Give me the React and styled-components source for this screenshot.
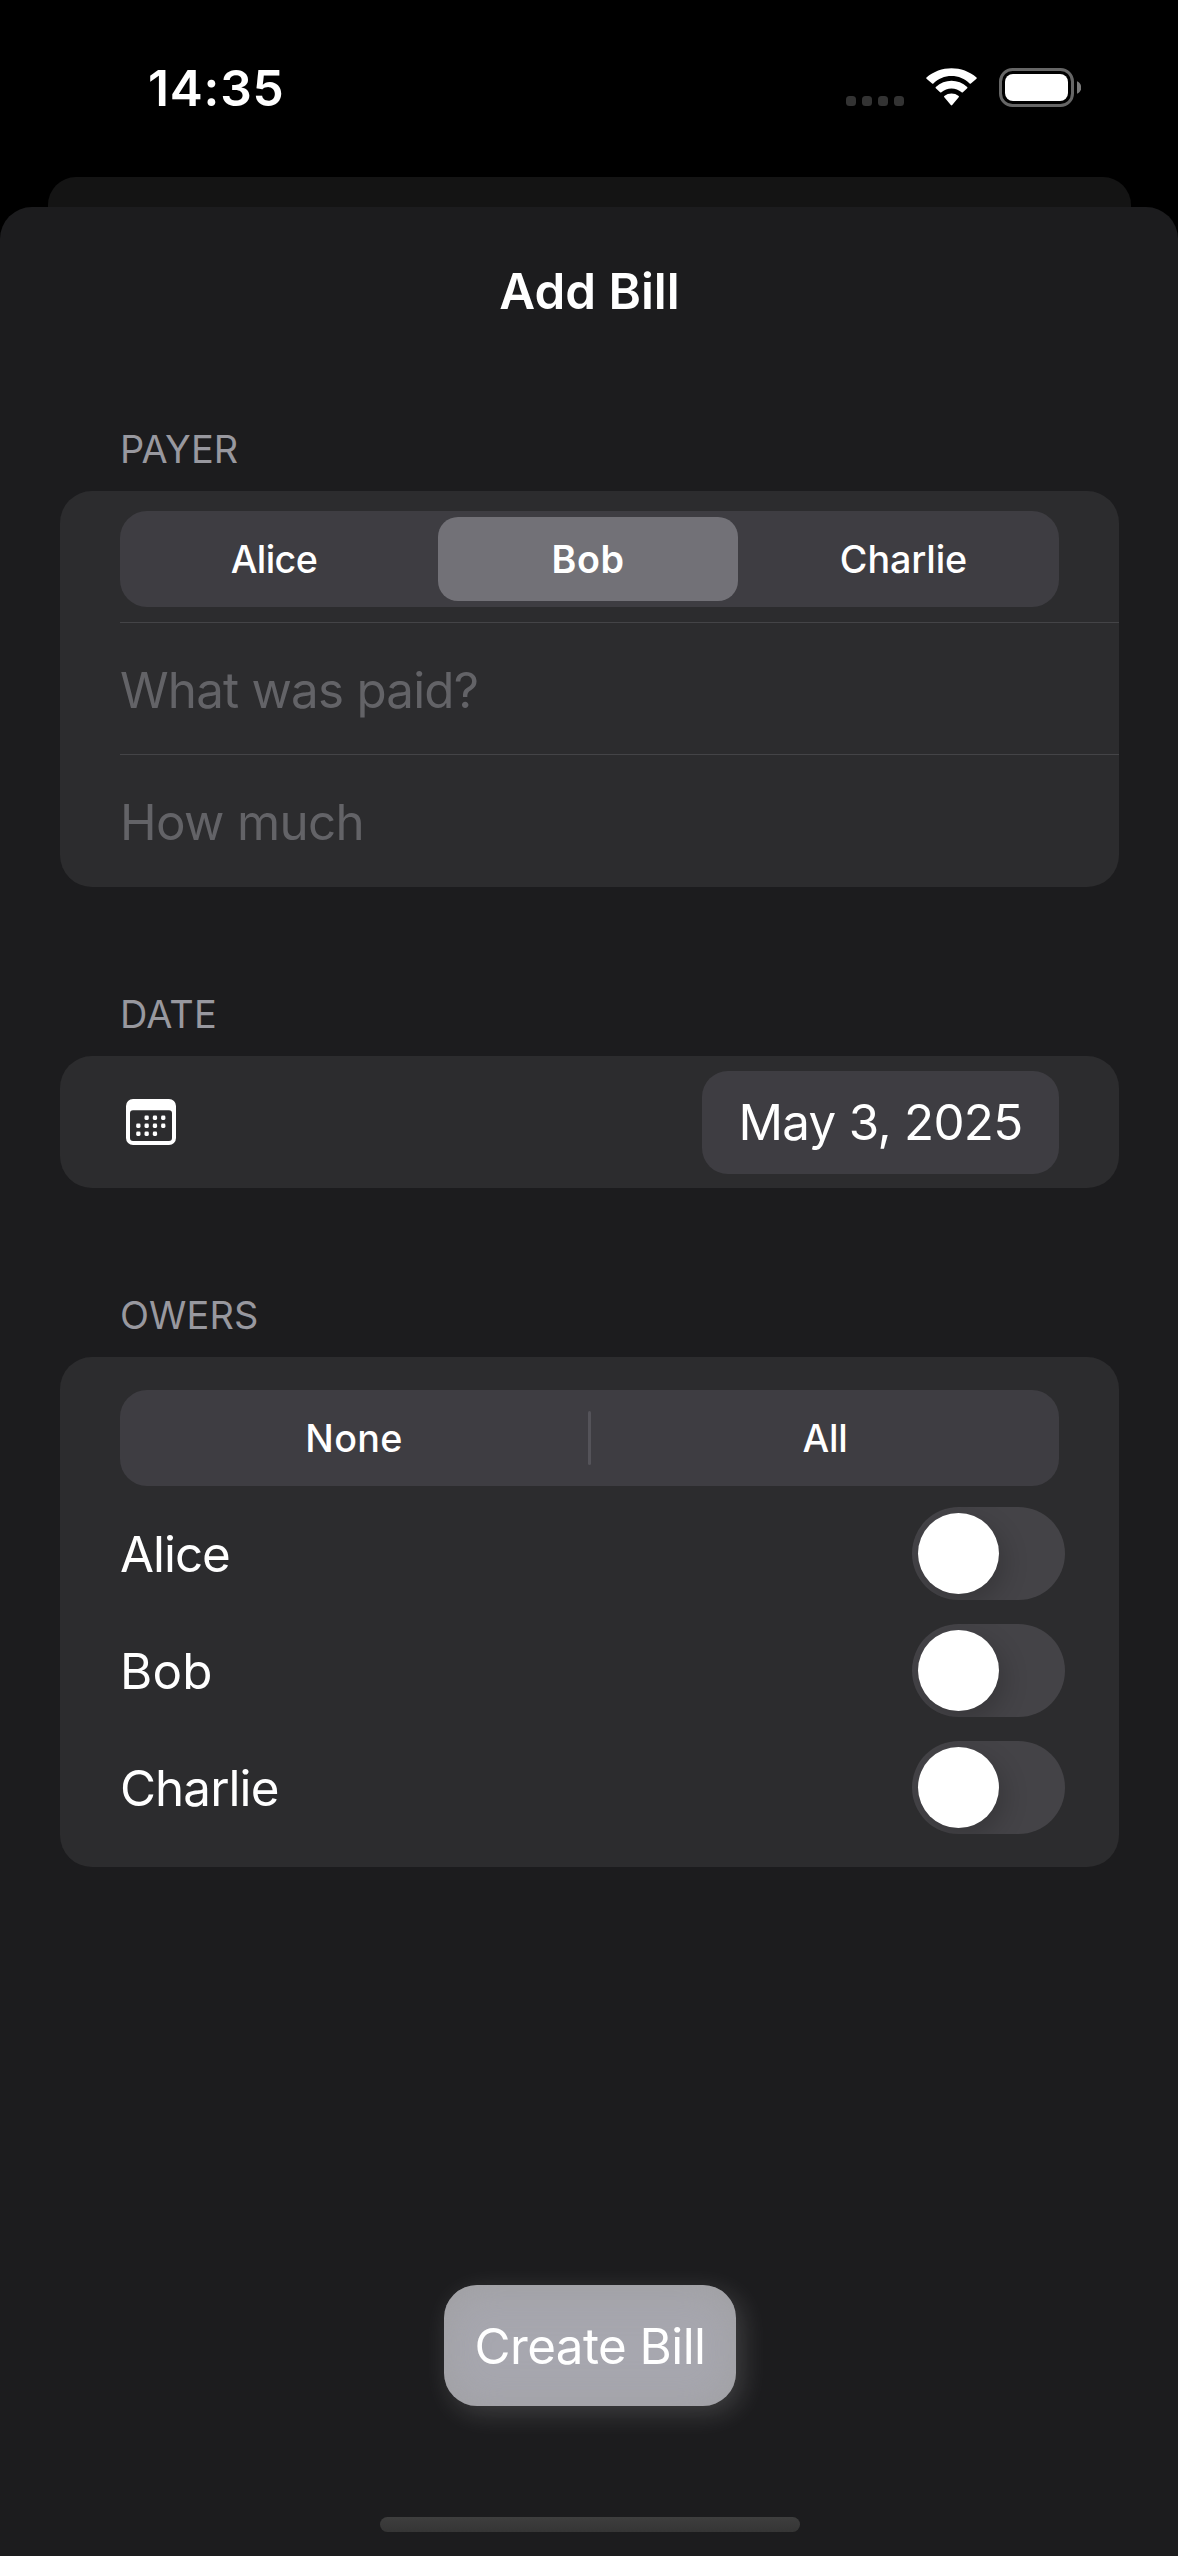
import React, { useState } from "react";
import styled, { createGlobalStyle } from "styled-components";

const GlobalStyle = createGlobalStyle`
  *, *::before, *::after { box-sizing: border-box; }
  html, body { margin: 0; padding: 0; background: #000; }
  body {
    font-family: Inter, "Liberation Sans", sans-serif;
    color: #fff;
    -webkit-font-smoothing: antialiased;
  }
  button { font: inherit; color: inherit; border: 0; padding: 0; margin: 0; background: none; }
`;

const Screen = styled.main`
  width: 1178px;
  height: 2556px;
  overflow: hidden;
  display: flex;
  flex-direction: column;
  background: #000;
`;

const StatusBar = styled.header`
  height: 177px;
  flex: none;
  display: flex;
  justify-content: space-between;
  align-items: flex-start;
  padding: 57px 97px 0 148px;
`;

const Clock = styled.span`
  font-size: 49.6px;
  font-weight: 600;
  line-height: 62px;
  letter-spacing: 0.8px;
`;

const StatusIcons = styled.div`
  display: flex;
  align-items: flex-end;
  padding-top: 11px;
`;

const SignalDots = styled.div`
  display: flex;
  gap: 6px;
  margin: 0 22px 1px 0;
`;

const SignalDot = styled.i`
  width: 10px;
  height: 10px;
  border-radius: 3.5px;
  background: #333;
`;

const WifiGlyph = styled.svg`
  display: block;
  width: 51px;
  height: 38px;
  margin: 0 22px 1px 0;
`;

const BatteryGlyph = styled.svg`
  display: block;
  width: 82px;
  height: 39px;
`;

const BackSheet = styled.div`
  height: 30px;
  flex: none;
  margin: 0 47px 0 48px;
  border-radius: 28px 28px 0 0;
  background: #141414;
`;

const Sheet = styled.section`
  flex: 1;
  display: flex;
  flex-direction: column;
  padding: 0 59px 24px 60px;
  border-radius: 32px 32px 0 0;
  background: #1c1c1e;
`;

const SheetTitle = styled.h1`
  margin: 0 0 50px;
  height: 168px;
  line-height: 168px;
  text-align: center;
  font-size: 49.3px;
  font-weight: 600;
`;

const Section = styled.section`
  margin-bottom: 103px;
`;

const SectionLabel = styled.h2`
  margin: 0;
  padding: 0 0 18px 60px;
  font-size: 37.9px;
  font-weight: 400;
  line-height: 48px;
  color: #98989f;
  letter-spacing: 0.15px;
`;

const Card = styled.div`
  display: flex;
  flex-direction: column;
  border-radius: 32px;
  background: #2c2c2e;
  padding: ${(p) => p.$pad || "0"};
`;

const Row = styled.div`
  height: ${(p) => p.$height || 132}px;
  display: flex;
  align-items: ${(p) => p.$align || "center"};
  justify-content: space-between;
  margin-left: 60px;
  padding-right: 60px;
  padding-top: ${(p) => p.$top || 0}px;
  border-bottom: ${(p) => (p.$divided ? "1px solid #444447" : "0")};
`;

const Body = styled.span`
  font-size: 49.3px;
  font-weight: 400;
  line-height: 62px;
  white-space: nowrap;
  letter-spacing: ${(p) => p.$track || 0}px;
  color: ${(p) => (p.$muted ? "#636367" : "#fff")};
`;

const Segments = styled.div`
  display: grid;
  grid-template-columns: ${(p) => p.$columns};
  width: 939px;
  height: 96px;
  border-radius: 27px;
  background: #3e3d42;
`;

const Segment = styled.button`
  margin: ${(p) => (p.$selected ? "6px 10px" : "6px 0")};
  border-radius: 20px;
  background: ${(p) => (p.$selected ? "#727177" : "transparent")};
  font-size: 37.7px;
  font-weight: ${(p) => (p.$selected ? 600 : 500)};
  line-height: 84px;
  letter-spacing: ${(p) => p.$track || 0}px;
`;

const SegmentDivider = styled.i`
  align-self: center;
  height: 54px;
  border-radius: 2px;
  background: #545359;
`;

const CalendarGlyph = styled.svg`
  display: block;
  width: 50px;
  height: 46px;
  margin-left: 6px;
`;

const DatePill = styled.button`
  width: 357px;
  height: 103px;
  border-radius: 26px;
  background: #3e3d42;
`;

const SegmentSlot = styled.div`
  padding: 0 60px 9px;
`;

const Switch = styled.button`
  width: 153px;
  height: 93px;
  margin-right: -6px;
  padding: 6px;
  display: flex;
  justify-content: ${(p) => (p.$on ? "flex-end" : "flex-start")};
  overflow: hidden;
  border-radius: 47px;
  background: ${(p) => (p.$on ? "#30d158" : "#444347")};
`;

const Knob = styled.i`
  width: 81px;
  height: 81px;
  border-radius: 50%;
  background: #fff;
  box-shadow: 6px 9px 24px rgba(0, 0, 0, 0.18);
`;

const Footer = styled.footer`
  margin-top: auto;
  display: flex;
  flex-direction: column;
  align-items: center;
`;

const CreateButton = styled.button`
  width: 292px;
  height: 121px;
  margin: 0 0 111px 1px;
  border-radius: 33px;
  background: #a7a7af;
  box-shadow:
    6px 7px 27px rgba(255, 255, 255, 0.16),
    inset 0 3px 44px rgba(150, 150, 146, 0.45);
`;

const HomeIndicator = styled.i`
  width: 420px;
  height: 15px;
  border-radius: 8px;
  margin-left: 1px;
  background: linear-gradient(#3e3e3e, #353535);
`;

function Wifi() {
  return (
    <WifiGlyph viewBox="0 0 51 38" fill="#fff">
      <path d="M25.5 8.1c6.9 0 13.3 2.7 18.1 7.3.4.3.9.3 1.3 0L50.500 10.700c.4-.4.4-.8 0-1.200C36.600-2.900 14.400-2.900.5 9.500c-.4.4-.4.8 0 1.200L6.100 15.400c.4.3.9.3 1.300 0C12.200 10.800 18.600 8.100 25.500 8.100z" />
      <path d="M25.500 20.400c3.800 0 7.300 1.400 10.100 3.900.4.4.9.300 1.300 0l4.300-4.100c.4-.4.4-.9 0-1.300-8.900-8.100-22.500-8.100-31.400 0-.4.4-.4.9 0 1.300l4.300 4.100c.4.300.9.400 1.300 0 2.800-2.500 6.300-3.900 10.100-3.900z" />
      <path d="M32.700 29.200c.4-.4.4-.9 0-1.200-4.300-3.300-10.100-3.300-14.400 0-.4.300-.4.800 0 1.200l6.500 7.800c.4.500 1 .5 1.400 0z" />
    </WifiGlyph>
  );
}

function Battery() {
  return (
    <BatteryGlyph viewBox="0 0 82 39">
      <rect x="1.5" y="1.5" width="72" height="36" rx="12" fill="none" stroke="#666" strokeWidth="3" />
      <rect x="6" y="6" width="63" height="27" rx="8" fill="#fff" />
      <path d="M78 13.300c2.600 1 4.200 3.500 4.200 6.200s-1.600 5.200-4.200 6.200z" fill="#7a7a7a" />
    </BatteryGlyph>
  );
}

const CALENDAR_ROWS = [
  { y: 16.6, cols: [1, 2, 3] },
  { y: 24.6, cols: [0, 1, 2, 3] },
  { y: 32.6, cols: [0, 1, 2] },
];

function Calendar() {
  return (
    <CalendarGlyph viewBox="0 0 50 46" fill="#fff">
      <path
        fillRule="evenodd"
        d="M7 0h36a7 7 0 0 1 7 7v32a7 7 0 0 1-7 7H7a7 7 0 0 1-7-7V7a7 7 0 0 1 7-7zM7 11.300a3 3 0 0 0-3 3V39a3 3 0 0 0 3 3h36a3 3 0 0 0 3-3V14.300a3 3 0 0 0-3-3z"
      />
      {CALENDAR_ROWS.map(({ y, cols }) =>
        cols.map((c) => (
          <rect key={`${y}-${c}`} x={10.2 + c * 8.3} y={y} width="4.3" height="4.3" rx="1.3" />
        ))
      )}
    </CalendarGlyph>
  );
}

const PAYERS = [
  { name: "Alice", track: -0.6 },
  { name: "Bob", track: 0.6 },
  { name: "Charlie", track: -0.1 },
];

const OWERS = [
  { name: "Alice", track: -1 },
  { name: "Bob", track: 0.2 },
  { name: "Charlie", track: -0.9 },
];

export default function App() {
  const [payer, setPayer] = useState("Bob");
  const [owing, setOwing] = useState([]);
  const toggle = (name) =>
    setOwing((list) => (list.includes(name) ? list.filter((n) => n !== name) : [...list, name]));

  return (
    <>
      <GlobalStyle />
      <Screen>
        <StatusBar>
          <Clock>14:35</Clock>
          <StatusIcons>
            <SignalDots>
              <SignalDot />
              <SignalDot />
              <SignalDot />
              <SignalDot />
            </SignalDots>
            <Wifi />
            <Battery />
          </StatusIcons>
        </StatusBar>

        <BackSheet />
        <Sheet>
          <SheetTitle>Add Bill</SheetTitle>

          <Section>
            <SectionLabel>PAYER</SectionLabel>
            <Card>
              <Row $divided $align="flex-start" $top={20}>
                <Segments $columns="308px 320px 311px">
                  {PAYERS.map((p) => (
                    <Segment
                      key={p.name}
                      $track={p.track}
                      $selected={p.name === payer}
                      onClick={() => setPayer(p.name)}
                    >
                      {p.name}
                    </Segment>
                  ))}
                </Segments>
              </Row>
              <Row $divided $top={2}>
                <Body $muted $track={-0.77}>What was paid?</Body>
              </Row>
              <Row $top={2}>
                <Body $muted $track={-0.63}>How much</Body>
              </Row>
            </Card>
          </Section>

          <Section>
            <SectionLabel>DATE</SectionLabel>
            <Card>
              <Row>
                <Calendar />
                <DatePill>
                  <Body $track={-0.7}>May 3, 2025</Body>
                </DatePill>
              </Row>
            </Card>
          </Section>

          <Section>
            <SectionLabel>OWERS</SectionLabel>
            <Card $pad="33px 0 21px">
              <SegmentSlot>
                <Segments $columns="468px 3px 468px">
                  <Segment $track={0.3} onClick={() => setOwing([])}>None</Segment>
                  <SegmentDivider />
                  <Segment $track={-0.2} onClick={() => setOwing(OWERS.map((o) => o.name))}>All</Segment>
                </Segments>
              </SegmentSlot>
              {OWERS.map((o) => (
                <Row key={o.name} $height={117}>
                  <Body $track={o.track}>{o.name}</Body>
                  <Switch $on={owing.includes(o.name)} onClick={() => toggle(o.name)}>
                    <Knob />
                  </Switch>
                </Row>
              ))}
            </Card>
          </Section>

          <Footer>
            <CreateButton>
              <Body $track={-0.54}>Create Bill</Body>
            </CreateButton>
            <HomeIndicator />
          </Footer>
        </Sheet>
      </Screen>
    </>
  );
}
